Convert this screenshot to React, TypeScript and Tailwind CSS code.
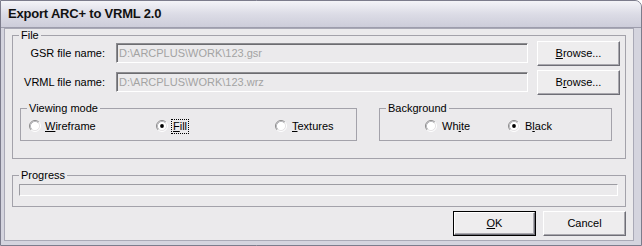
import type { ReactNode } from "react";

function Radio({ checked }: { checked?: boolean }) {
  return (
    <svg width="12" height="12" viewBox="0 0 12 12" className="shrink-0">
      <circle cx="6" cy="6" r="4.5" fill="#ffffff" />
      <path d="M2.11 9.89 A5.5 5.5 0 0 1 9.89 2.11" fill="none" stroke="#8a8a8a" />
      <path d="M9.89 2.11 A5.5 5.5 0 0 1 2.11 9.89" fill="none" stroke="#ffffff" />
      <path d="M2.82 9.18 A4.5 4.5 0 0 1 9.18 2.82" fill="none" stroke="#b8b8bc" />
      <path d="M9.18 2.82 A4.5 4.5 0 0 1 2.82 9.18" fill="none" stroke="#e6e4e6" />
      {checked && <circle cx="6" cy="6" r="1.9" fill="#000000" />}
    </svg>
  );
}

function Btn({ children, isDefault, className }: { children: ReactNode; isDefault?: boolean; className?: string }) {
  return (
    <div
      className={`h-[25px] w-[83px] ${isDefault ? "border border-black" : ""} ${className ?? ""}`}
    >
      <div className="flex h-full w-full items-center justify-center border-t border-l border-t-white border-l-white border-b border-r border-b-[#6e6e76] border-r-[#6e6e76] bg-[#eeedee] shadow-[inset_-1px_-1px_0_#a9a8ae]">
        <span className="text-[11px] leading-[13px] text-black">{children}</span>
      </div>
    </div>
  );
}

function Group({ label, className, children }: { label: string; className?: string; children: ReactNode }) {
  return (
    <fieldset className={`border border-[#a3a2aa] ${className ?? ""}`}>
      <legend className="ml-[6px] bg-[#ebeaec] px-[2px] text-[11px] leading-[11px] text-black">{label}</legend>
      {children}
    </fieldset>
  );
}

function FileRow({ label, value, browse, className }: { label: string; value: string; browse: ReactNode; className?: string }) {
  return (
    <div className={`flex h-[24px] items-center ${className ?? ""}`}>
      <div className="w-[92px] text-right text-[11px] leading-[13px] text-black">{label}</div>
      <div className="ml-[11px] flex h-[20px] w-[412px] items-center border-t border-l border-t-[#8c8c90] border-l-[#8c8c90] border-b border-r border-b-white border-r-white bg-[#ebeaec] shadow-[inset_1px_1px_0_#6c6c70]">
        <span className="pl-[2px] text-[11px] leading-[13px] text-[#a3a3a3]">{value}</span>
      </div>
      <Btn className="ml-[9px]">{browse}</Btn>
    </div>
  );
}

export default function App() {
  return (
    <div className="h-[246px] w-[642px] bg-white font-['Liberation_Sans',Arial,sans-serif]">
      <div className="flex h-[246px] w-[642px] flex-col overflow-hidden rounded-tr-[7px] border border-[#7c7c8c] bg-[#d4d4de]">
        {/* title bar */}
        <div className="flex h-[27px] shrink-0 items-center border-b border-[#9d9dac] bg-gradient-to-b from-[#f4f4f8] via-[#dcdce6] to-[#cdcdda] pl-[7px]">
          <span className="text-[13px] font-bold tracking-[-0.2px] text-[#111]">Export ARC+ to VRML 2.0</span>
        </div>

        {/* client area */}
        <div className="mb-[4px] ml-[3px] mr-[7px] flex flex-1 flex-col border border-[#a9a9b6] bg-[#ebeaec] px-[7px]">
          <Group label="File" className="mt-[1px] pb-[17px]">
            <FileRow
              label="GSR file name:"
              value="D:\ARCPLUS\WORK\123.gsr"
              browse={<><span className="underline">B</span>rowse...</>}
            />
            <FileRow
              label="VRML file name:"
              value="D:\ARCPLUS\WORK\123.wrz"
              browse={<>B<span className="underline">r</span>owse...</>}
              className="mt-[5px]"
            />
            <div className="mt-[9px] flex">
              <Group label="Viewing mode" className="ml-[7px] w-[337px] pb-[6px]">
                <div className="mt-[4px] flex h-[16px] items-center text-[11px] leading-[13px] text-black">
                  <div className="ml-[8px] flex w-[127px] items-center gap-[4px]">
                    <Radio />
                    <span><span className="underline">W</span>ireframe</span>
                  </div>
                  <div className="flex w-[119px] items-center gap-[3px]">
                    <Radio checked />
                    <span className="border border-dotted border-black px-[1px]"><span className="underline">F</span>ill</span>
                  </div>
                  <div className="flex items-center gap-[5px]">
                    <Radio />
                    <span><span className="underline">T</span>extures</span>
                  </div>
                </div>
              </Group>
              <Group label="Background" className="ml-[22px] w-[233px] pb-[6px]">
                <div className="mt-[4px] flex h-[16px] items-center text-[11px] leading-[13px] text-black">
                  <div className="ml-[45px] flex w-[83px] items-center gap-[5px]">
                    <Radio />
                    <span>Wh<span className="underline">i</span>te</span>
                  </div>
                  <div className="flex items-center gap-[5px]">
                    <Radio checked />
                    <span>B<span className="underline">l</span>ack</span>
                  </div>
                </div>
              </Group>
            </div>
          </Group>

          <Group label="Progress" className="mt-[11px] pb-[10px]">
            <div className="ml-[6px] mr-[7px] mt-[3px] h-[12px] border-t border-l border-t-[#9c9ca2] border-l-[#9c9ca2] border-b border-r border-b-white border-r-white" />
          </Group>

          <div className="mt-[4px] flex justify-end gap-[7px]">
            <Btn isDefault><span className="underline">O</span>K</Btn>
            <Btn>Cancel</Btn>
          </div>
        </div>
      </div>
    </div>
  );
}
